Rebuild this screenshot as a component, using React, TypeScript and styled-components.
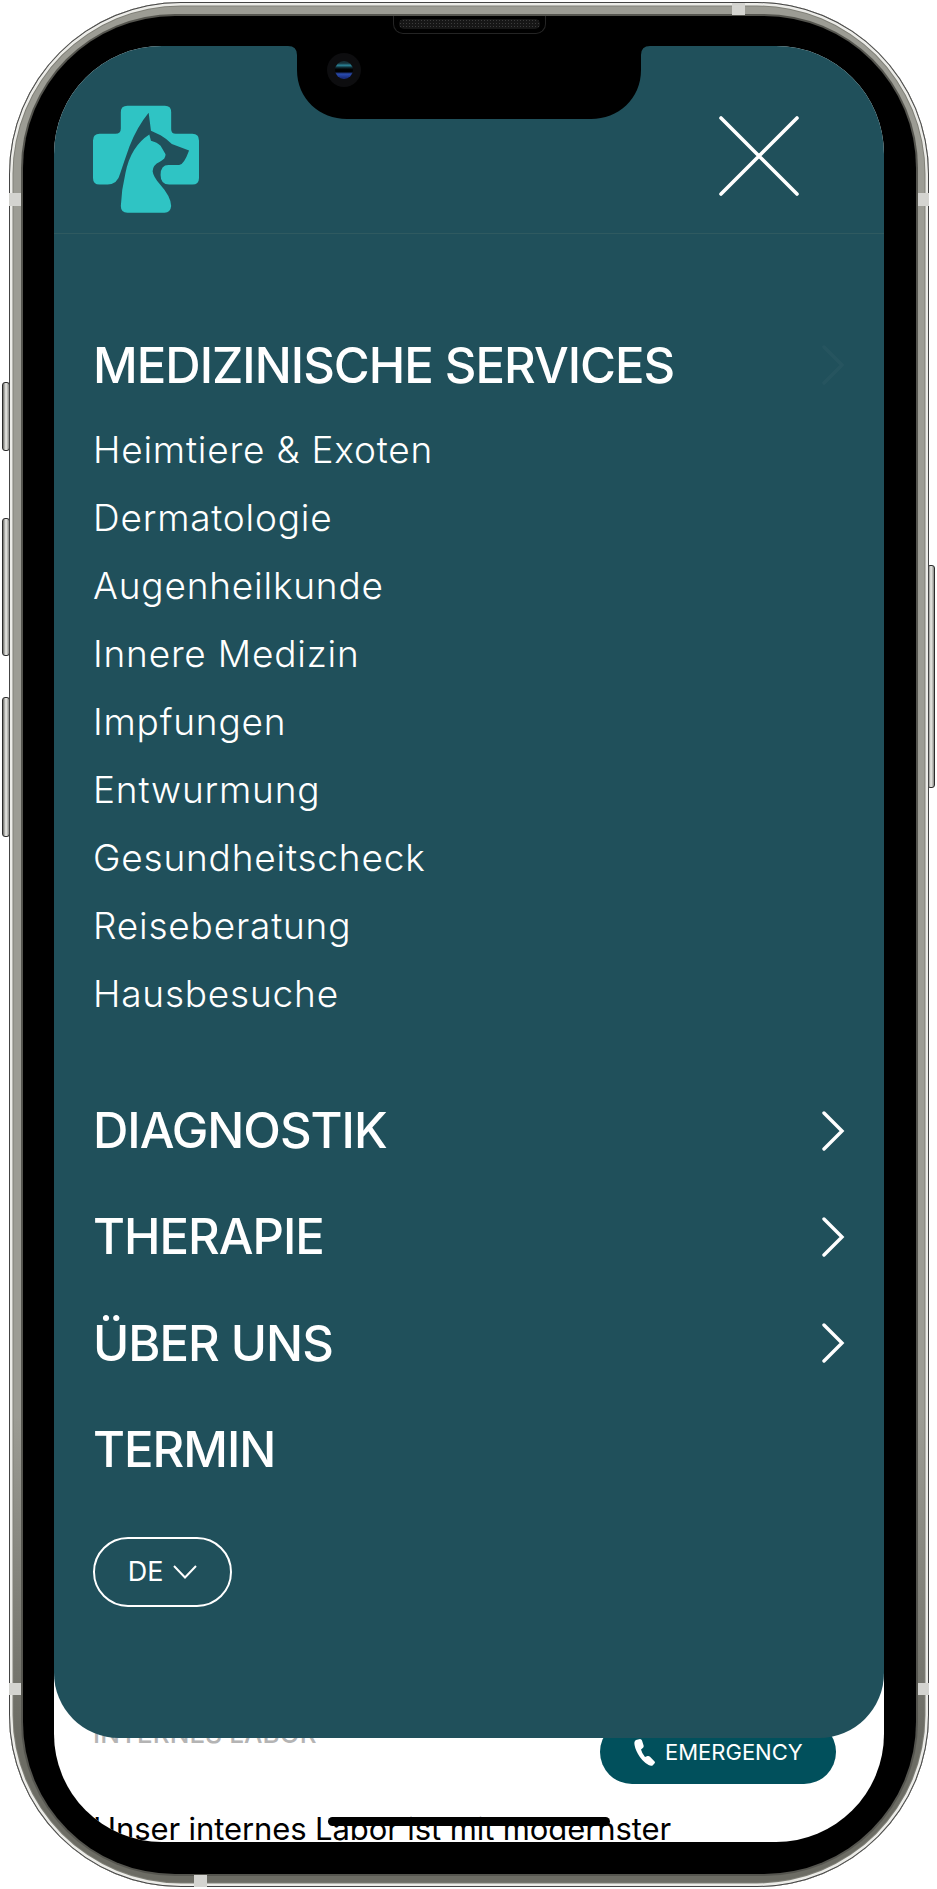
import React from "react";
import styled, { createGlobalStyle } from "styled-components";

const GlobalStyle = createGlobalStyle`
  html, body {
    margin: 0;
    padding: 0;
    background: #fff;
    font-family: "Inter", "Liberation Sans", sans-serif;
  }
`;

const services = [
  "Heimtiere & Exoten",
  "Dermatologie",
  "Augenheilkunde",
  "Innere Medizin",
  "Impfungen",
  "Entwurmung",
  "Gesundheitscheck",
  "Reiseberatung",
  "Hausbesuche",
];

const sections = [
  { label: "DIAGNOSTIK", arrow: true },
  { label: "THERAPIE", arrow: true },
  { label: "ÜBER UNS", arrow: true },
  { label: "TERMIN", arrow: false },
];

const sideButtons = [
  { side: "left", top: 382, height: 69 },
  { side: "left", top: 518, height: 138 },
  { side: "left", top: 697, height: 140 },
  { side: "right", top: 565, height: 223 },
];

const antennaBands = [
  { x: 9, y: 193, w: 12, h: 13 },
  { x: 9, y: 1683, w: 12, h: 12 },
  { x: 918, y: 193, w: 11, h: 13 },
  { x: 918, y: 1683, w: 11, h: 12 },
  { x: 732, y: 3, w: 13, h: 12 },
  { x: 194, y: 1875, w: 13, h: 12 },
];

function Logo() {
  return (
    <svg width="106" height="108" viewBox="68 46 320 324" aria-hidden="true">
      <path
        fill="#2fc4c4"
        d="M172 47 H285 Q304 47 304 66 V118 Q304 132 318 132 H368 Q388 132 388 152 V265 Q388 285 368 285 H298 Q272 285 272 256 Q272 226 296 226 H328 Q342 226 358 182 L306 163 Q290 146 272 136 L243 123 L236 68 Q200 112 178 170 Q162 215 150 252 Q142 285 112 285 H88 Q68 285 68 265 V152 Q68 132 88 132 H136 Q152 132 152 116 V66 Q152 47 172 47 Z"
      />
      <path
        fill="#2fc4c4"
        d="M238 134 L243 153 Q262 158 272 168 L287 194 Q288 208 270 216 Q248 226 248 245 Q250 262 270 284 Q304 322 304 350 Q302 370 284 370 H172 Q152 370 152 350 Q154 300 166 250 Q182 170 238 134 Z"
      />
    </svg>
  );
}

function CloseIcon() {
  return (
    <CloseSvg viewBox="0 0 80 80" aria-hidden="true">
      <path d="M2 2 L78 78 M78 2 L2 78" stroke="#fff" strokeWidth="3.6" strokeLinecap="round" fill="none" />
    </CloseSvg>
  );
}

function Chevron({ faint }: { faint?: boolean }) {
  return (
    <ChevronSvg $faint={faint} viewBox="0 0 24 40" aria-hidden="true">
      <path d="M3 2 L21 20 L3 38" stroke="#fff" strokeWidth="3.4" fill="none" strokeLinecap="round" />
    </ChevronSvg>
  );
}

function PhoneIcon() {
  return (
    <svg width="22" height="27" viewBox="0 0 22 27" aria-hidden="true">
      <path
        fill="#fff"
        d="M2 1 L6 0 Q7.5 0 8 1.5 L9.6 6.5 Q10 8 8.8 9 L7 10.4 Q8 14.5 11 18 L13.5 17 Q15 16.6 16 17.8 L20.6 22.4 Q21.4 23.6 20.4 24.6 L18.6 26.4 Q17 27.4 14.6 26 Q8 22.4 4 15 Q0 7.5 0.4 3.4 Q0.6 1.6 2 1 Z"
      />
    </svg>
  );
}

export default function App() {
  return (
    <Page>
      <GlobalStyle />
      {sideButtons.map((b) => (
        <SideButton key={b.top} $side={b.side} $top={b.top} $height={b.height} />
      ))}
      <Rim>
        <Bezel>
          <Screen>
            <UnderPage>
              <LabelRow>
                <PageLabel>INTERNES LABOR</PageLabel>
                <EmergencyButton>
                  <PhoneIcon />
                  EMERGENCY
                </EmergencyButton>
              </LabelRow>
              <PageText>Unser internes Labor ist mit modernster</PageText>
            </UnderPage>

            <Menu>
              <MenuHeader>
                <Logo />
                <CloseIcon />
              </MenuHeader>
              <Nav>
                <NavRow>
                  MEDIZINISCHE SERVICES
                  <Chevron faint />
                </NavRow>
                <SubList>
                  {services.map((s) => (
                    <SubItem key={s}>{s}</SubItem>
                  ))}
                </SubList>
                {sections.map((s) => (
                  <NavRow key={s.label}>
                    {s.label}
                    {s.arrow && <Chevron />}
                  </NavRow>
                ))}
                <LangButton>
                  DE
                  <svg width="24" height="14" viewBox="0 0 24 14" aria-hidden="true">
                    <path d="M1 1 L12 12.5 L23 1" stroke="#fff" strokeWidth="2" fill="none" />
                  </svg>
                </LangButton>
              </Nav>
            </Menu>

            <HomeBar />
          </Screen>
          <NotchSvg viewBox="0 0 362 74" aria-hidden="true">
            <path d="M0 0 Q9 0 9 9 V24 C9 53 32 73 59 73 H303 C330 73 353 53 353 24 V9 Q353 0 362 0 Z" fill="#000" />
          </NotchSvg>
          <Camera />
          <Speaker />
        </Bezel>
      </Rim>
      {antennaBands.map((a) => (
        <AntennaBand key={`${a.x}-${a.y}`} $x={a.x} $y={a.y} $w={a.w} $h={a.h} />
      ))}
    </Page>
  );
}

const Page = styled.div`
  position: relative;
  width: 937px;
  height: 1889px;
  box-sizing: border-box;
  padding: 2px 8px 2px 9px;
  overflow: hidden;
`;

const SideButton = styled.div<{ $side: string; $top: number; $height: number }>`
  position: absolute;
  top: ${(p) => p.$top}px;
  height: ${(p) => p.$height}px;
  width: 8px;
  ${(p) => (p.$side === "left" ? "left: 2px;" : "left: 927px;")}
  box-sizing: border-box;
  border: 1px solid #2c2c2c;
  border-radius: 3px;
  background: linear-gradient(to right, #6a6a66, #eeeeea 50%, #8a8a86);
`;

const AntennaBand = styled.div<{ $x: number; $y: number; $w: number; $h: number }>`
  position: absolute;
  left: ${(p) => p.$x}px;
  top: ${(p) => p.$y}px;
  width: ${(p) => p.$w}px;
  height: ${(p) => p.$h}px;
  background: #d4d4d0;
`;

const Rim = styled.div`
  position: relative;
  box-sizing: border-box;
  width: 920px;
  height: 1885px;
  padding: 14px 13px 13px 14px;
  border-radius: 172px;
  background: linear-gradient(to bottom, #9c9c94 0%, #9c9c94 75%, #6c6c64 92%);
  box-shadow: inset 0 0 0 1px #444, inset 0 0 0 3.5px #ecece8, inset 0 0 0 4.5px #808078;
`;

const Bezel = styled.div`
  position: relative;
  box-sizing: border-box;
  width: 893px;
  height: 1858px;
  padding: 30px 32px 32px 31px;
  border-radius: 152px;
  background: #000;
  box-shadow: 0 0 0 2px #55554f;
`;

const Screen = styled.div`
  position: relative;
  width: 830px;
  height: 1796px;
  display: flex;
  flex-direction: column;
  justify-content: flex-end;
  overflow: hidden;
  border-radius: 108px;
  background: #fff;
`;

const UnderPage = styled.div`
  height: 122px;
  padding: 0 48px 0 39px;
`;

const LabelRow = styled.div`
  display: flex;
  justify-content: space-between;
  align-items: flex-start;
`;

const PageLabel = styled.div`
  line-height: 28px;
  font-size: 26px;
  font-weight: 500;
  letter-spacing: 0.1px;
  color: #b4b4b4;
`;

const EmergencyButton = styled.div`
  width: 236px;
  height: 64px;
  box-sizing: border-box;
  padding-left: 34px;
  display: flex;
  align-items: center;
  gap: 9px;
  border-radius: 32px;
  background: #01505c;
  color: #fff;
  font-size: 22px;
  font-weight: 400;
`;

const PageText = styled.div`
  margin-top: 25px;
  height: 40px;
  line-height: 40px;
  font-size: 31px;
  letter-spacing: -0.1px;
  color: #000;
  white-space: nowrap;
`;

const Menu = styled.div`
  position: absolute;
  top: 0;
  left: 0;
  right: 0;
  height: 1692px;
  border-radius: 0 0 65px 65px;
  background: #20505b;
  color: #fff;
`;

const MenuHeader = styled.header`
  box-sizing: border-box;
  height: 188px;
  padding: 59px 85px 0 39px;
  display: flex;
  justify-content: space-between;
  align-items: flex-start;
  border-bottom: 1px solid #2f5a60;
`;

const CloseSvg = styled.svg`
  width: 80px;
  height: 80px;
  margin-top: 11px;
`;

const Nav = styled.nav`
  padding: 78px 39px 0 39px;
`;

const NavRow = styled.div`
  height: 106.4px;
  display: flex;
  align-items: center;
  justify-content: space-between;
  font-size: 49px;
  font-weight: 450;
  letter-spacing: -1px;
`;

const ChevronSvg = styled.svg<{ $faint?: boolean }>`
  width: 24px;
  height: 40px;
  opacity: ${(p) => (p.$faint ? 0.025 : 1)};
`;

const SubList = styled.div`
  margin: -2px 0 50px;
`;

const SubItem = styled.div`
  height: 67.9px;
  line-height: 67.9px;
  font-size: 37px;
  font-weight: 350;
  letter-spacing: 0.8px;
`;

const LangButton = styled.div`
  box-sizing: border-box;
  width: 139px;
  height: 70px;
  margin-top: 34px;
  display: flex;
  align-items: center;
  justify-content: center;
  gap: 10px;
  border: 2px solid #fff;
  border-radius: 35px;
  font-size: 27px;
`;

const HomeBar = styled.div`
  position: absolute;
  left: 274px;
  bottom: 16px;
  width: 282px;
  height: 9px;
  border-radius: 5px;
  background: #000;
`;

const NotchSvg = styled.svg`
  position: absolute;
  left: 265px;
  top: 30px;
  width: 362px;
  height: 74px;
`;

const Camera = styled.div`
  position: absolute;
  left: 304px;
  top: 37px;
  width: 34px;
  height: 34px;
  display: flex;
  align-items: center;
  justify-content: center;
  border-radius: 50%;
  background: #0d0d0f;
  &::after {
    content: "";
    width: 18px;
    height: 18px;
    border-radius: 50%;
    background: linear-gradient(
      to bottom,
      #163038 0 12%,
      #2a8296 24%,
      #0a1c22 38%,
      #000 48% 60%,
      #2a4cb0 72%,
      #1a2f80 92%
    );
  }
`;

const Speaker = styled.div`
  position: absolute;
  left: 370px;
  top: 0;
  width: 153px;
  height: 18px;
  box-sizing: border-box;
  border: 1px solid #242424;
  border-top: none;
  border-radius: 0 0 10px 10px;
  padding: 3px 5px;
  &::after {
    content: "";
    display: block;
    height: 10px;
    border-radius: 5px;
    background: radial-gradient(#3c3c3c 1px, #161616 1px) 0 0 / 3px 3px;
  }
`;
